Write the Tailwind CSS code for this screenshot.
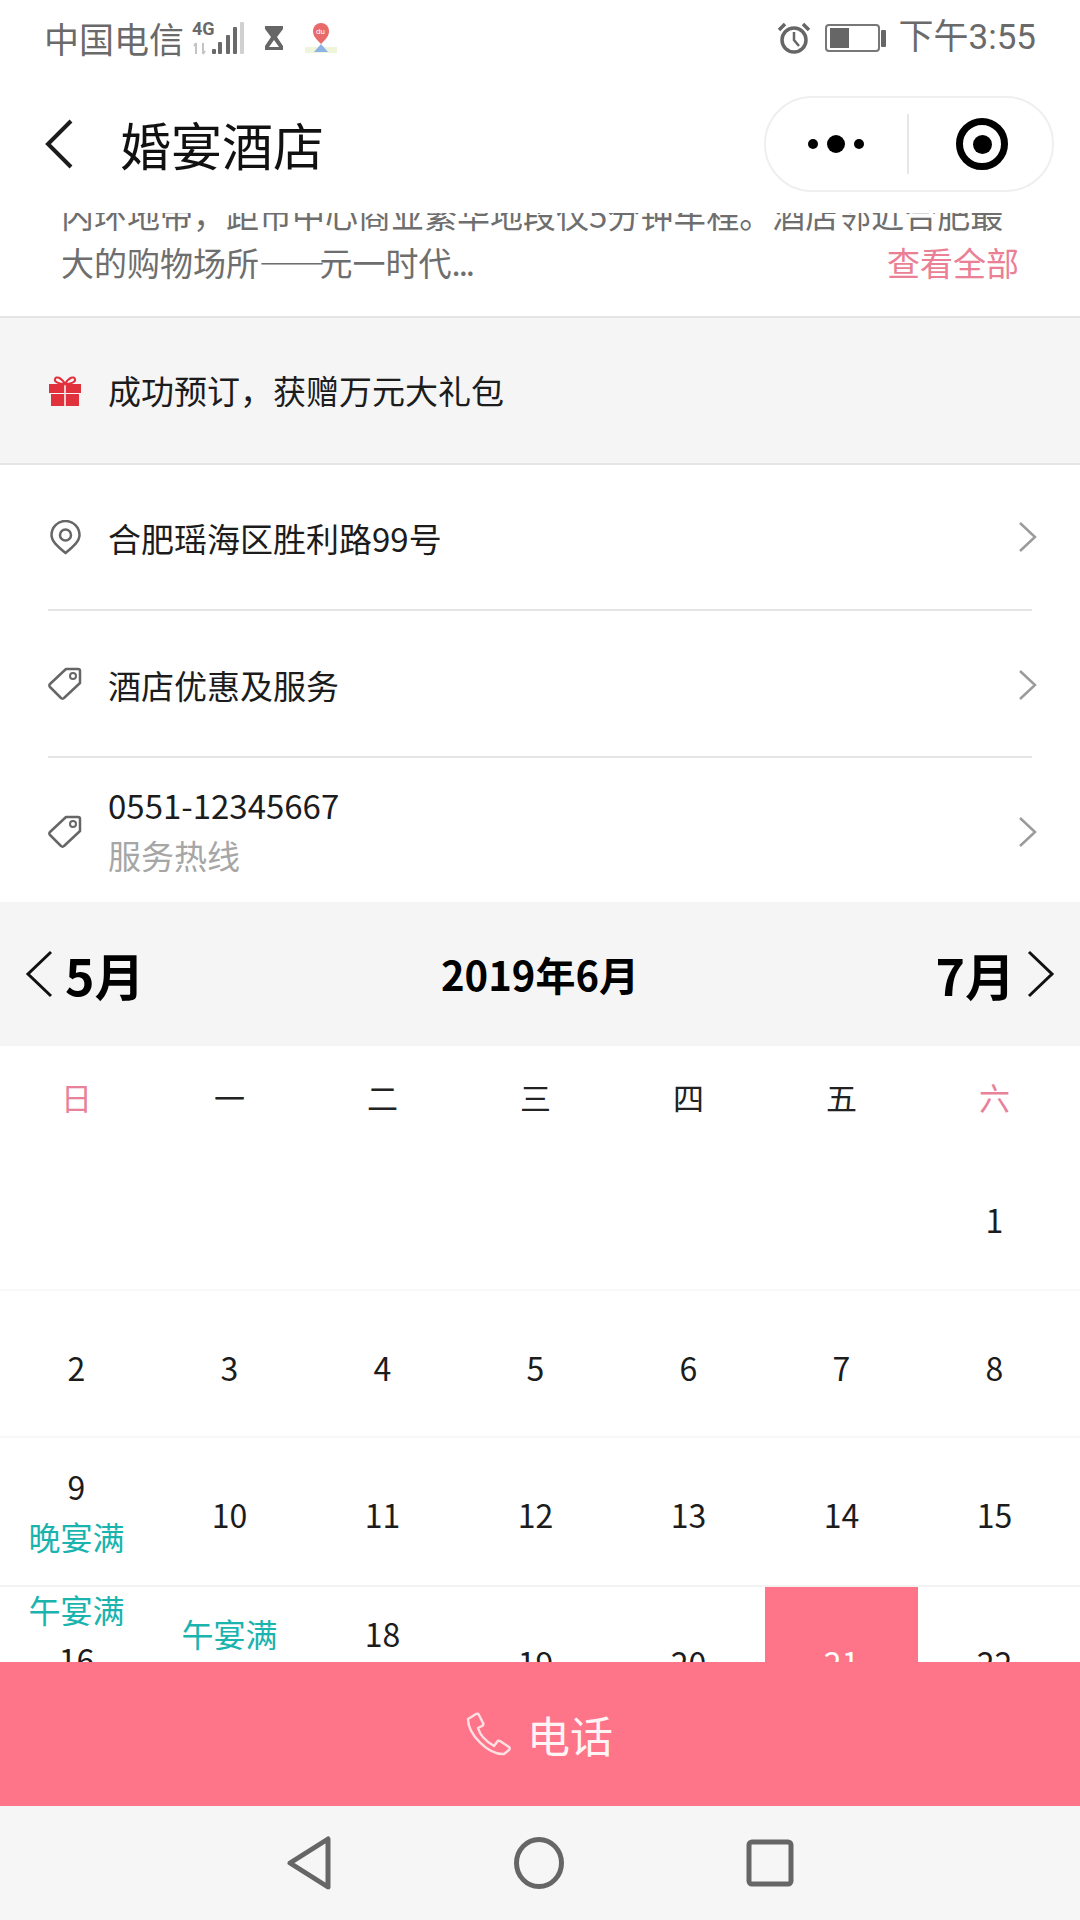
<!DOCTYPE html>
<html lang="zh-CN">
  <head>
    <meta charset="UTF-8" />
    <meta name="viewport" content="width=device-width, initial-scale=1.0" />
    <title>婚宴酒店</title>
    <script src="https://cdn.jsdelivr.net/npm/@tailwindcss/browser@4"></script>
  </head>
  <body class="bg-white">
    <div class="w-[1080px] h-[1920px] flex flex-col overflow-hidden font-['Noto_Sans_CJK_SC',sans-serif] text-[33px] text-[#1c1c1c]">
      <!-- Status bar -->
      <div class="h-[75px] shrink-0 flex items-center px-[44px] text-[35px] text-[#6a6a6a]">
        <span class="leading-none">中国电信</span>
        <svg class="ml-[7px]" width="54" height="36" viewBox="0 0 54 36">
          <text x="1" y="15" font-size="18" font-weight="700" fill="#6a6a6a" font-family="Roboto, sans-serif">4G</text>
          <path d="M5 23v11M5 23l-2 3M12 34V23M12 34l2-3" stroke="#c4c4c4" stroke-width="2" fill="none" />
          <rect x="21" y="29" width="4" height="5" rx="1" fill="#6a6a6a" />
          <rect x="27" y="22" width="4" height="12" rx="1" fill="#6a6a6a" />
          <rect x="35" y="15" width="4" height="19" rx="1" fill="#6a6a6a" />
          <rect x="42" y="7" width="4" height="27" rx="1" fill="#6a6a6a" />
          <rect x="49" y="2" width="4" height="32" rx="1" fill="#d0d0d0" />
        </svg>
        <svg class="ml-[19px]" width="20" height="26" viewBox="0 0 20 26">
          <path d="M1 1h18v3l-6 8 6 9v4H1v-4l6-9-6-8z" fill="#666" />
          <path d="M10 15l5 7H5z" fill="#fff" />
        </svg>
        <svg class="ml-[20px]" width="34" height="32" viewBox="0 0 34 32">
          <rect x="1" y="25" width="32" height="6" fill="#eef5d8" />
          <path d="M17 22l7 8H10z" fill="#8db2e8" />
          <path d="M17 22c-5-5-8-8-8-13a8 8 0 0 1 16 0c0 5-3 8-8 13z" fill="#e86a6a" />
          <text x="12" y="12" font-size="8" fill="#fff" font-family="Roboto, sans-serif">du</text>
        </svg>
        <svg class="ml-auto" width="34" height="34" viewBox="0 0 34 34">
          <circle cx="17" cy="19" r="12" fill="none" stroke="#666" stroke-width="3.5" />
          <path d="M17 11v8l5 6" fill="none" stroke="#666" stroke-width="2.5" />
          <path d="M2 9l6-6M32 9l-6-6" stroke="#666" stroke-width="3.5" />
        </svg>
        <svg class="ml-[14px]" width="62" height="30" viewBox="0 0 62 30">
          <rect x="1" y="2" width="53" height="26" rx="3" fill="none" stroke="#777" stroke-width="2" />
          <rect x="5" y="5" width="19" height="20" fill="#666" />
          <rect x="56" y="7" width="5" height="17" rx="1" fill="#666" />
        </svg>
        <span class="ml-[12px] leading-none font-['Roboto','Noto_Sans_CJK_SC',sans-serif] text-[35px]">下午3:55</span>
      </div>

      <!-- Title bar -->
      <div class="h-[138px] shrink-0 flex items-center pl-[45px] pr-[26px]">
        <svg width="28" height="50" viewBox="0 0 28 50">
          <path d="M26 2L3 25l23 23" fill="none" stroke="#1c1c1c" stroke-width="4" />
        </svg>
        <span class="ml-[47px] text-[51px] leading-none text-[#111]">婚宴酒店</span>
        <div class="ml-auto w-[290px] h-[96px] rounded-full border-2 border-[#efefef] flex items-center">
          <div class="w-[98px] flex items-center justify-end gap-[9px]">
            <span class="w-[10px] h-[10px] rounded-full bg-black"></span>
            <span class="w-[18px] h-[18px] rounded-full bg-black"></span>
            <span class="w-[10px] h-[10px] rounded-full bg-black"></span>
          </div>
          <div class="ml-[43px] w-[2px] h-[60px] bg-[#e6e6e6]"></div>
          <div class="ml-[47px] w-[52px] h-[52px] rounded-full border-[7px] border-black flex items-center justify-center">
            <span class="w-[19px] h-[19px] rounded-full bg-black"></span>
          </div>
        </div>
      </div>

      <!-- Scrolling content -->
      <div class="flex-1 min-h-0 overflow-hidden">
        <!-- Intro -->
        <div class="h-[103px] overflow-hidden pl-[61px] pr-[61px] text-[33px] leading-[52px] text-[#6e6e6e]">
          <div class="-mt-[25px] whitespace-nowrap">内环地带，距市中心商业繁华地段仅5分钟车程。酒店邻近合肥最</div>
          <div class="-mt-[4px] flex justify-between whitespace-nowrap">
            <span>大的购物场所<span class="tracking-[-5.5px]">——</span>元一时代<span class="tracking-[-2px]">...</span></span>
            <span class="text-[33px] text-[#ea7f95]">查看全部</span>
          </div>
        </div>

        <!-- Gift -->
        <div class="h-[149px] border-y-2 border-[#e5e5e5] bg-[#f5f5f5] flex items-center pl-[49px]">
          <svg width="32" height="30" viewBox="0 0 32 30">
            <path d="M16 8C12 1 7 0 6 3s4 5 10 5c6 0 11-2 10-5s-6-2-10 5z" fill="none" stroke="#e0313c" stroke-width="2" />
            <rect x="0" y="8" width="15.2" height="9" fill="#e0313c" />
            <rect x="16.8" y="8" width="15.2" height="9" fill="#e0313c" />
            <rect x="2" y="18" width="13.2" height="12" fill="#e0313c" />
            <rect x="16.8" y="18" width="13.2" height="12" fill="#e0313c" />
          </svg>
          <span class="ml-[27px] text-[33px] text-[#1c1c1c]">成功预订，获赠万元大礼包</span>
        </div>

        <!-- Info rows -->
        <div class="px-[48px]">
          <div class="h-[146px] border-b-2 border-[#e5e5e5] flex items-center">
            <svg class="ml-[2px]" width="31" height="35" viewBox="0 0 31 35">
              <path d="M15.5 33C7 26 1.5 21 1.5 15a14 14 0 0 1 28 0c0 6-5.5 11-14 18z" fill="none" stroke="#666" stroke-width="2.5" />
              <circle cx="15.5" cy="15" r="5.5" fill="none" stroke="#666" stroke-width="2.5" />
            </svg>
            <span class="ml-[27px] pt-[3px] text-[33px]">合肥瑶海区胜利路99号</span>
            <svg class="ml-auto -mr-[6px]" width="20" height="32" viewBox="0 0 20 32">
              <path d="M2 2l15 14L2 30" fill="none" stroke="#9b9b9b" stroke-width="2.5" />
            </svg>
          </div>
          <div class="h-[147px] border-b-2 border-[#e5e5e5] flex items-center">
            <svg width="34" height="33" viewBox="0 0 34 33">
              <path d="M18 2h12a2 2 0 0 1 2 2v12L16 31a2 2 0 0 1-3 0L2 20a2 2 0 0 1 0-3z" fill="none" stroke="#666" stroke-width="2.5" stroke-linejoin="round" />
              <circle cx="25" cy="9" r="3" fill="none" stroke="#666" stroke-width="2" />
            </svg>
            <span class="ml-[26px] pt-[4px] text-[33px]">酒店优惠及服务</span>
            <svg class="ml-auto -mr-[6px] mt-[2px]" width="20" height="32" viewBox="0 0 20 32">
              <path d="M2 2l15 14L2 30" fill="none" stroke="#9b9b9b" stroke-width="2.5" />
            </svg>
          </div>
          <div class="h-[144px] flex items-center">
            <svg class="mt-[2px]" width="34" height="33" viewBox="0 0 34 33">
              <path d="M18 2h12a2 2 0 0 1 2 2v12L16 31a2 2 0 0 1-3 0L2 20a2 2 0 0 1 0-3z" fill="none" stroke="#666" stroke-width="2.5" stroke-linejoin="round" />
              <circle cx="25" cy="9" r="3" fill="none" stroke="#666" stroke-width="2" />
            </svg>
            <div class="ml-[26px] flex flex-col leading-[50px]">
              <span class="text-[33px]">0551-12345667</span>
              <span class="text-[33px] text-[#a6a6a6]">服务热线</span>
            </div>
            <svg class="ml-auto -mr-[6px] mt-[4px]" width="20" height="32" viewBox="0 0 20 32">
              <path d="M2 2l15 14L2 30" fill="none" stroke="#9b9b9b" stroke-width="2.5" />
            </svg>
          </div>
        </div>

        <!-- Calendar header -->
        <div class="h-[144px] bg-[#f5f5f5] grid grid-cols-3 items-center px-[25px] text-black font-bold">
          <div class="flex items-center gap-[12px]">
            <svg width="28" height="48" viewBox="0 0 28 48">
              <path d="M26 2L3 24l23 22" fill="none" stroke="#111" stroke-width="3" />
            </svg>
            <span class="text-[50px] leading-none">5月</span>
          </div>
          <div class="text-center text-[40px] leading-none">2019年6月</div>
          <div class="flex items-center justify-end gap-[12px]">
            <span class="text-[50px] leading-none">7月</span>
            <svg width="28" height="48" viewBox="0 0 28 48">
              <path d="M2 2l23 22L2 46" fill="none" stroke="#111" stroke-width="3" />
            </svg>
          </div>
        </div>

        <!-- Week days -->
        <div class="h-[96px] grid grid-cols-[repeat(7,153px)] items-center text-center text-[31px] text-[#222] pt-[6px]">
          <span class="text-[#e8829b]">日</span>
          <span>一</span>
          <span>二</span>
          <span>三</span>
          <span>四</span>
          <span>五</span>
          <span class="text-[#e8829b]">六</span>
        </div>

        <!-- Dates -->
        <div class="text-[32px] leading-[50px] text-[#1c1c1c] text-center">
          <div class="h-[147px] grid grid-cols-[repeat(7,153px)] items-center pt-[6px]">
            <span></span><span></span><span></span><span></span><span></span><span></span>
            <span>1</span>
          </div>
          <div class="h-[147px] grid grid-cols-[repeat(7,153px)] items-center border-t-2 border-[#f8f8f8] pt-[6px]">
            <span>2</span><span>3</span><span>4</span><span>5</span><span>6</span><span>7</span><span>8</span>
          </div>
          <div class="h-[149px] grid grid-cols-[repeat(7,153px)] items-center border-t-2 border-[#f8f8f8] pt-[4px]">
            <div class="-mt-[5px] flex flex-col"><span>9</span><span class="text-[#1ab3ae]">晚宴满</span></div>
            <span>10</span><span>11</span><span>12</span><span>13</span><span>14</span><span>15</span>
          </div>
          <div class="h-[149px] grid grid-cols-[repeat(7,153px)] items-center border-t-2 border-[#f3f3f3]">
            <div class="-translate-y-[3px] flex flex-col"><span class="text-[#1ab3ae]">午宴满</span><span>16</span><span class="text-[#1ab3ae]">晚宴满</span></div>
            <div class="-translate-y-[4px] flex flex-col"><span class="text-[#1ab3ae]">午宴满</span><span>17</span></div>
            <div class="-translate-y-[4px] flex flex-col"><span>18</span><span class="text-[#1ab3ae]">晚宴满</span></div>
            <span>19</span>
            <span>20</span>
            <div class="self-stretch flex items-center justify-center bg-[#fe7488] text-white"><span>21</span></div>
            <span>22</span>
          </div>
        </div>
      </div>

      <!-- Call bar -->
      <div class="h-[144px] shrink-0 bg-[#fe7488] flex items-center justify-center gap-[14px] pr-[2px] text-white">
        <svg width="48" height="46" viewBox="0 0 48 46">
          <path d="M3 8L11 3a2 2 0 0 1 3 1l4 8a2 2 0 0 1-1 3l-4 2C15 24 22 31 29 35l3-4a2 2 0 0 1 3-1l9 6a2 2 0 0 1 0 3l-5 4C24 44 3 24 3 8z" fill="none" stroke="#ffdfe2" stroke-width="2.5" stroke-linejoin="round" />
        </svg>
        <span class="text-[43px] leading-none text-[#fff4f5]">电话</span>
      </div>

      <!-- Android nav -->
      <div class="h-[114px] shrink-0 bg-[#f6f6f6] flex items-center justify-center gap-[182px]">
        <svg width="46" height="54" viewBox="0 0 46 54">
          <path d="M42 3v48L4 27z" fill="none" stroke="#666" stroke-width="5" stroke-linejoin="round" />
        </svg>
        <svg width="50" height="52" viewBox="0 0 50 52">
          <ellipse cx="25" cy="26" rx="22.5" ry="23.5" fill="none" stroke="#666" stroke-width="5" />
        </svg>
        <svg width="48" height="48" viewBox="0 0 48 48">
          <rect x="3" y="3" width="42" height="42" rx="3" fill="none" stroke="#666" stroke-width="5" />
        </svg>
      </div>
    </div>
  </body>
</html>
